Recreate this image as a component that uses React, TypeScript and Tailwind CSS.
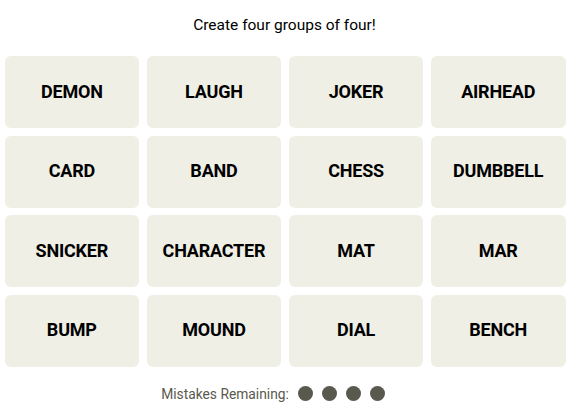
const words = [
  'DEMON', 'LAUGH', 'JOKER', 'AIRHEAD',
  'CARD', 'BAND', 'CHESS', 'DUMBBELL',
  'SNICKER', 'CHARACTER', 'MAT', 'MAR',
  'BUMP', 'MOUND', 'DIAL', 'BENCH',
];

export default function App() {
  return (
    <div className="w-[570px] h-[407px] bg-white flex flex-col items-center font-['Roboto',sans-serif] text-black">
      <p className="mt-[15px] h-[20px] leading-[20px] text-[15.5px] -translate-x-[0.5px]">Create four groups of four!</p>
      <div className="mt-[21px] grid grid-cols-4 gap-x-[7.5px] gap-y-[7.5px] w-[561px]">
        {words.map((w) => (
          <div
            key={w}
            className="h-[72px] pb-[2px] rounded-[6px] bg-[#efefe6] flex items-center justify-center text-[18px] font-bold tracking-[-0.2px]"
          >
            {w}
          </div>
        ))}
      </div>
      <div className="mt-[17px] mr-[24px] flex items-center text-[13.8px] text-[#5a594e]">
        <span>Mistakes Remaining:</span>
        <div className="ml-[9px] flex gap-[9px]">
          {[0, 1, 2, 3].map((i) => (
            <span key={i} className="w-[15px] h-[15px] rounded-full bg-[#5a594e]" />
          ))}
        </div>
      </div>
    </div>
  );
}
